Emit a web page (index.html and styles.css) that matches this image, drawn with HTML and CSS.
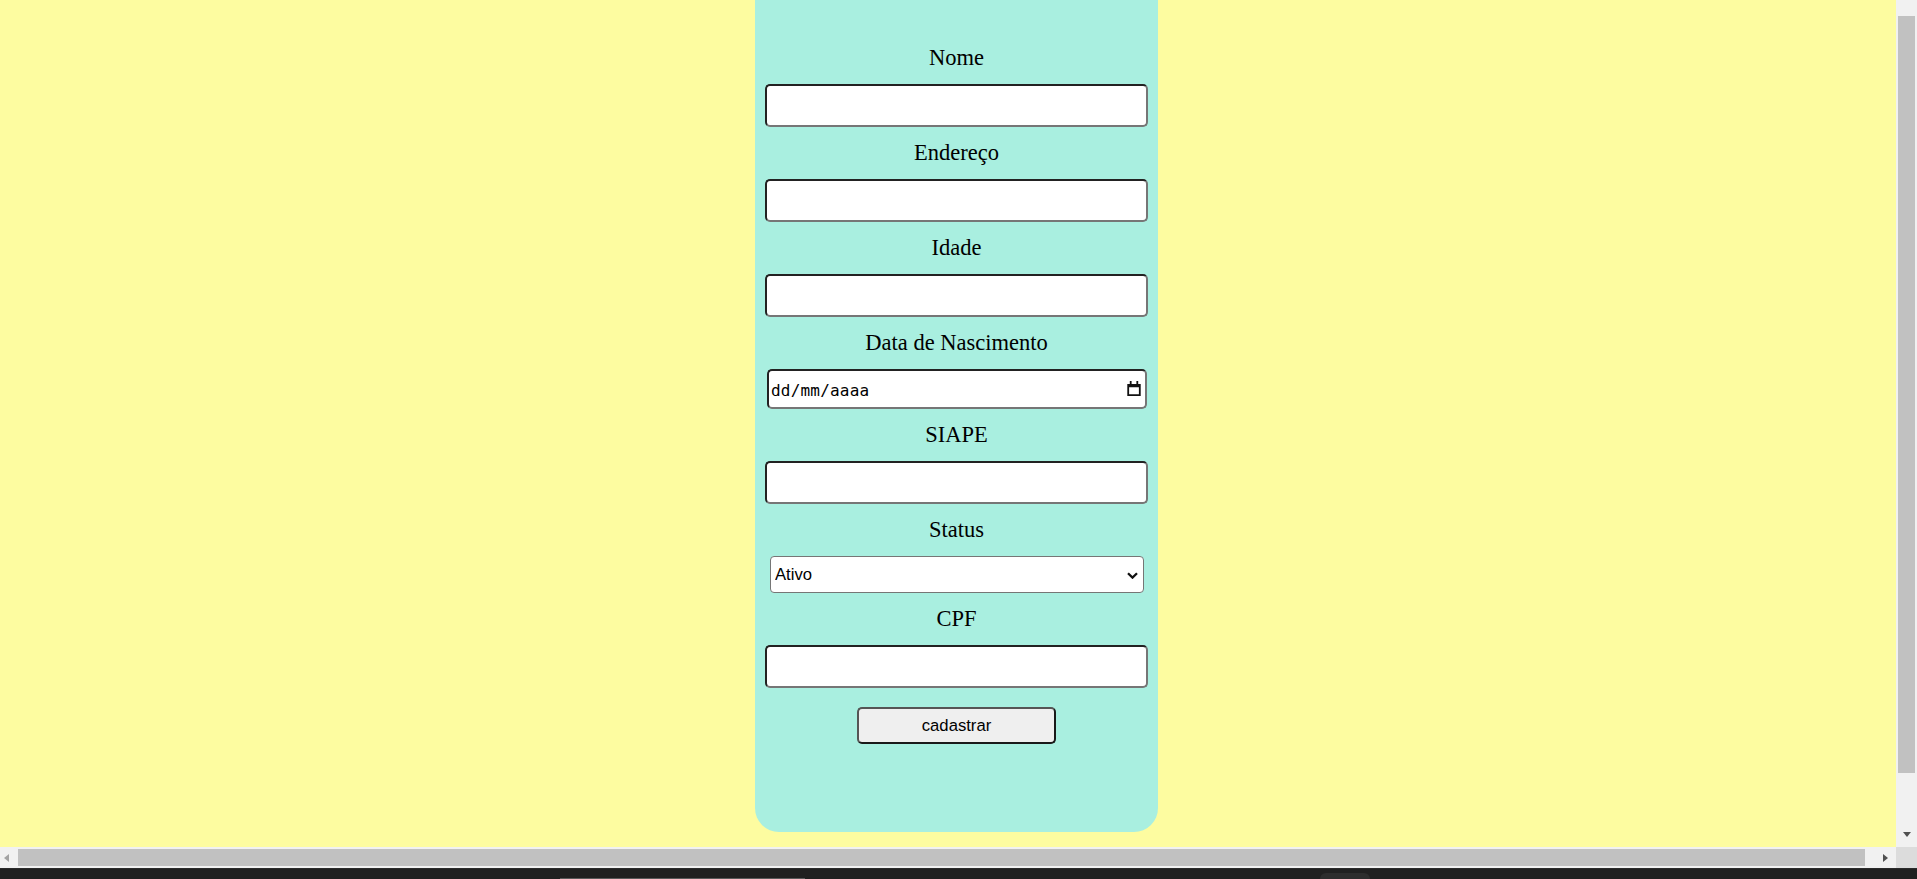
FILE: index.html
```html
<!DOCTYPE html>
<html lang="pt-BR">
<head>
<meta charset="utf-8">
<title>Cadastro</title>
<link rel="stylesheet" href="styles.css">
</head>
<body>
<div class="screen">
  <main class="viewport">
    <form class="card" onsubmit="return false;">
      <label class="field-label first" for="nome">Nome</label>
      <input class="text-input" id="nome" type="text">

      <label class="field-label" for="endereco">Endereço</label>
      <input class="text-input" id="endereco" type="text">

      <label class="field-label" for="idade">Idade</label>
      <input class="text-input" id="idade" type="text">

      <label class="field-label" for="nascimento">Data de Nascimento</label>
      <div class="date-wrap">
        <input class="date-input" id="nascimento" type="text" placeholder="dd/mm/aaaa">
        <svg class="cal-icon" width="14" height="15" viewBox="0 0 14 15" aria-hidden="true">
          <rect x="2.8" y="0" width="1.8" height="3.6" fill="#111"/>
          <rect x="9.4" y="0" width="1.8" height="3.6" fill="#111"/>
          <path fill="#111" fill-rule="evenodd" d="M0.3 3H13.7V15H0.3Z M2.1 6.3H11.9V13.2H2.1Z"/>
        </svg>
      </div>

      <label class="field-label" for="siape">SIAPE</label>
      <input class="text-input" id="siape" type="text">

      <label class="field-label" for="status">Status</label>
      <div class="select-wrap">
        <select class="select" id="status">
          <option>Ativo</option>
          <option>Inativo</option>
        </select>
        <svg class="chev" width="11" height="7" viewBox="0 0 11 7" aria-hidden="true">
          <path d="M1 1.2L5.5 5.6L10 1.2" fill="none" stroke="#111" stroke-width="2.3"/>
        </svg>
      </div>

      <label class="field-label" for="cpf">CPF</label>
      <input class="text-input" id="cpf" type="text">

      <button class="submit" type="submit">cadastrar</button>
    </form>
  </main>

  <div class="vscroll">
    <div class="vscroll-top"></div>
    <div class="vscroll-thumb"></div>
    <div class="vscroll-rest"><span class="arrow-down"></span></div>
  </div>

  <div class="hscroll">
    <div class="hscroll-left"><span class="arrow-left"></span></div>
    <div class="hscroll-thumb"></div>
    <div class="hscroll-right"><span class="arrow-right"></span></div>
  </div>

  <div class="corner"></div>

  <div class="taskbar">
    <span class="task-line"></span>
    <span class="task-tab"></span>
  </div>
</div>
</body>
</html>
```

FILE: styles.css
```css
* {
  box-sizing: border-box;
}

html, body {
  margin: 0;
  padding: 0;
  width: 1917px;
  height: 879px;
  overflow: hidden;
}

.screen {
  display: grid;
  grid-template-columns: 1896px 21px;
  grid-template-rows: 847px 21px 11px;
  grid-template-areas:
    "main vs"
    "hs corner"
    "task task";
  width: 1917px;
  height: 879px;
}

.viewport {
  grid-area: main;
  background: #fdfca0;
  overflow: hidden;
}

.card {
  margin-left: 755px;
  width: 403px;
  height: 832px;
  padding-top: 45px;
  background: #a9efe0;
  border-radius: 0 0 24px 24px;
  display: flex;
  flex-direction: column;
  align-items: center;
}

.field-label {
  display: block;
  width: 100%;
  height: 26px;
  margin: 13px 0 13px;
  font-family: "Liberation Serif", "Times New Roman", serif;
  font-size: 22.5px;
  line-height: 26px;
  color: #000;
  text-align: center;
}

.field-label.first {
  margin-top: 0;
}

.text-input {
  display: block;
  width: 383px;
  height: 43px;
  margin: 0;
  padding: 0 4px;
  border: 2px solid;
  border-color: #222 #767676 #767676 #222;
  border-radius: 5px;
  background: #fff;
  font-family: "Liberation Sans", Arial, sans-serif;
  font-size: 16.67px;
  outline: none;
}

.date-wrap {
  position: relative;
  width: 380px;
  height: 40px;
}

.date-input {
  display: block;
  width: 100%;
  height: 100%;
  margin: 0;
  padding: 2px 30px 0 2.5px;
  border: 2px solid;
  border-color: #222 #767676 #767676 #222;
  border-radius: 5px;
  background: #fff;
  font-family: "DejaVu Sans Mono", "Liberation Mono", monospace;
  font-size: 16px;
  letter-spacing: 0.2px;
  color: #000;
  outline: none;
}

.date-input::placeholder {
  color: #000;
  opacity: 1;
}

.cal-icon {
  position: absolute;
  top: 12px;
  right: 6px;
  pointer-events: none;
}

.select-wrap {
  position: relative;
  width: 374px;
  height: 37px;
}

.select {
  display: block;
  width: 100%;
  height: 100%;
  margin: 0;
  padding: 0 24px 0 4.5px;
  border: 1px solid #767676;
  border-radius: 4px;
  background: #fff;
  appearance: none;
  -webkit-appearance: none;
  font-family: "Liberation Sans", Arial, sans-serif;
  font-size: 16.67px;
  color: #000;
  outline: none;
}

.chev {
  position: absolute;
  top: 16px;
  right: 6px;
  pointer-events: none;
}

.submit {
  display: block;
  width: 199px;
  height: 37px;
  margin-top: 19px;
  padding: 0;
  border: 2px solid;
  border-color: #555 #1a1a1a #1a1a1a #555;
  border-radius: 5px;
  background: #efefef;
  font-family: "Liberation Sans", Arial, sans-serif;
  font-size: 16.67px;
  color: #000;
}

/* scrollbars */
.vscroll {
  grid-area: vs;
  background: #f1f1f1;
  display: flex;
  flex-direction: column;
}

.vscroll-top {
  height: 16px;
}

.vscroll-thumb {
  height: 757px;
  margin: 0 2px;
  background: #c1c1c1;
}

.vscroll-rest {
  flex: 1;
  display: flex;
  justify-content: center;
  align-items: flex-end;
  padding-bottom: 10px;
}

.arrow-down {
  width: 0;
  height: 0;
  border-left: 4.5px solid transparent;
  border-right: 4.5px solid transparent;
  border-top: 5px solid #505050;
}

.hscroll {
  grid-area: hs;
  background: #f1f1f1;
  display: flex;
  align-items: center;
}

.hscroll-left {
  width: 18px;
  display: flex;
  align-items: center;
  padding-left: 4px;
}

.arrow-left {
  width: 0;
  height: 0;
  border-top: 4.5px solid transparent;
  border-bottom: 4.5px solid transparent;
  border-right: 5px solid #a3a3a3;
}

.hscroll-thumb {
  width: 1847px;
  height: 17px;
  background: #c1c1c1;
}

.hscroll-right {
  flex: 1;
  display: flex;
  justify-content: flex-end;
  align-items: center;
  padding-right: 8px;
}

.arrow-right {
  width: 0;
  height: 0;
  border-top: 4.5px solid transparent;
  border-bottom: 4.5px solid transparent;
  border-left: 5px solid #505050;
}

.corner {
  grid-area: corner;
  background: #dcdcdc;
}

.taskbar {
  grid-area: task;
  background: #202020;
  border-top: 1px solid #2b2b2b;
  display: flex;
  align-items: flex-end;
}

.task-line {
  margin-left: 560px;
  width: 245px;
  height: 1px;
  background: #5a5a5a;
}

.task-tab {
  margin-left: 515px;
  width: 50px;
  height: 6px;
  border-radius: 6px 6px 0 0;
  background: #2d2d2d;
}
```
